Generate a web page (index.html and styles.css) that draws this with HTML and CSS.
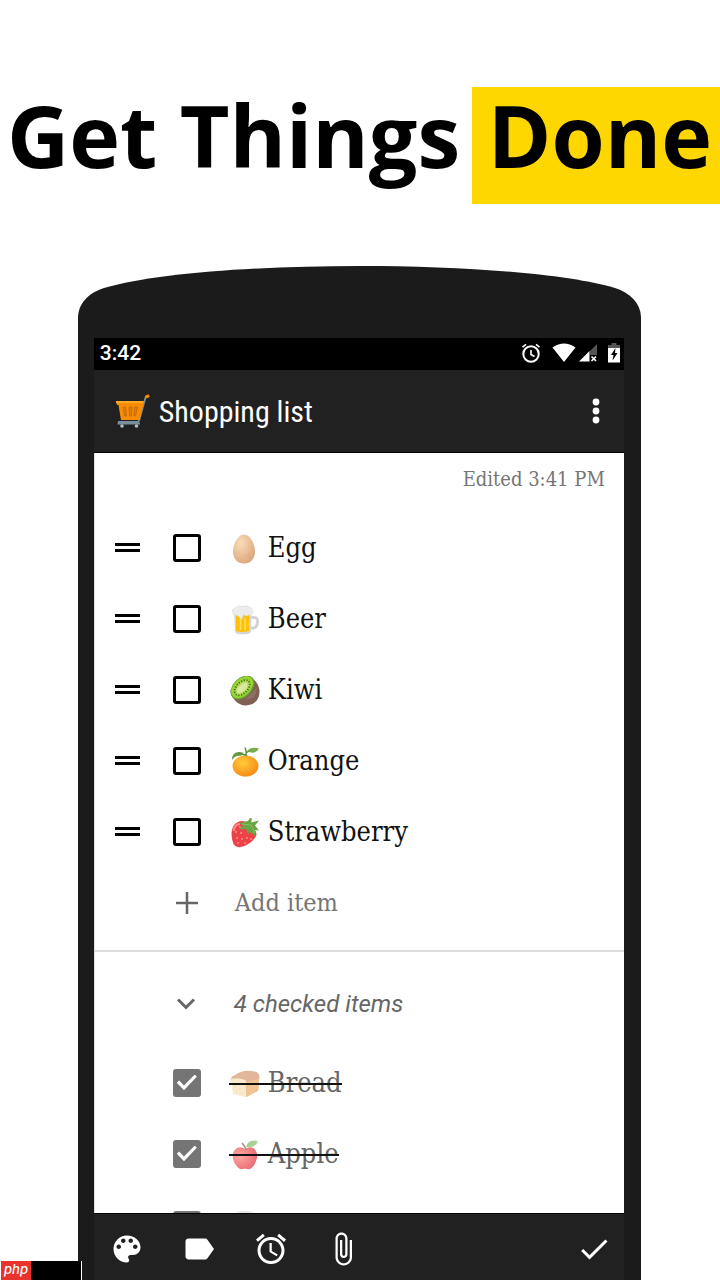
FILE: index.html
```html
<!DOCTYPE html>
<html lang="en">
<head>
    <meta charset="UTF-8">
    <meta name="viewport" content="width=device-width, initial-scale=1.0">
    <title>Get Things Done</title>
    <link rel="stylesheet" href="styles.css">
</head>
<body>
    <h1 class="headline"><span>Get Things</span> <mark>Done</mark></h1>

    <div class="phone">
        <svg class="phone-top" viewBox="0 0 562 72" preserveAspectRatio="none" aria-hidden="true">
            <path d="M0 72V52C0 38 10 27 26 22C78 7 180 0 281 0S484 7 536 22C552 27 562 38 562 52V72Z" fill="#1b1b1b"/>
        </svg>
        <div class="screen">
            <div class="status-bar">
                <span class="clock">3:42</span>
                <svg width="20" height="20" viewBox="0 0 20 20" fill="none" stroke="#fff" stroke-width="2"><circle cx="10" cy="11" r="7.7"/><path d="M10 7v4.5l3.5 2M1.5 4.2 5 1.3M18.5 4.2 15 1.3" stroke-width="1.6"/></svg>
                <svg class="wifi" width="24" height="20" viewBox="0 0 24 20"><path d="M.5 4.5Q12-3.5 23.5 4.5L12 19Z" fill="#fff"/></svg>
                <svg class="signal" width="19" height="18" viewBox="0 0 19 18"><path d="M18 0V11H11V7Z" fill="#555"/><path d="M0 17.5 10.5 7V17.5Z" fill="#fff"/><path d="m12.5 12.5 4.5 4.5m0-4.5-4.5 4.5" stroke="#fff" stroke-width="1.7"/></svg>
                <svg class="battery" width="12" height="20" viewBox="0 0 12 20"><path d="M3.5 0h5v2H12v3H0V2h3.5Z" fill="#555"/><path d="M0 5h12v14.5H0Z" fill="#fff"/><path d="M7.5 5 3 12h2.5L4.5 17.5 9.5 10H7Z" fill="#000"/></svg>
            </div>

            <header class="app-bar">
                <svg width="34" height="34" viewBox="0 0 34 34">
                    <path d="M33 2.2 29.5 3.5 23.5 25.5 22 28H2" fill="none" stroke="#78909c" stroke-width="1.8"/>
                    <path d="M0 7.5h28L23.5 26H5L2.5 11H1Z" fill="#fb8c00"/>
                    <path d="M0 8h27.5" stroke="#ffa726" stroke-width="2"/>
                    <path d="m7 13 1.500 9h2L9.500 13ZM13 13l.5 9h2l.5-9ZM21.500 13l-2 9h-1.500l.5-9Z" fill="#e07b08" stroke="#b86a12" stroke-width=".8"/>
                    <path d="M29.5 3.2 33.2 1.5" stroke="#fb8c00" stroke-width="3"/>
                    <path d="M1.5 29.5H24" stroke="#78909c" stroke-width="2"/>
                    <circle cx="6" cy="32" r="1.8" fill="#b0bec5"/><circle cx="20.5" cy="32" r="1.8" fill="#b0bec5"/>
                </svg>
                <h2>Shopping list</h2>
                <button type="button" class="menu-button" aria-label="More options">
                    <svg width="8" height="26" viewBox="0 0 8 26" fill="#fff"><circle cx="4" cy="4" r="3.4"/><circle cx="4" cy="13" r="3.4"/><circle cx="4" cy="22" r="3.4"/></svg>
                </button>
            </header>

            <main class="note">
                <p class="edited">Edited 3:41 PM</p>

                <ul class="items">
                    <li class="item">
                        <span class="handle"></span>
                        <input type="checkbox" id="egg">
                        <label for="egg">
                            <svg class="food" viewBox="0 0 30 30"><defs><radialGradient id="eggFill" cx=".35" cy=".3" r=".75"><stop offset="0" stop-color="#fbdcb8"/><stop offset="1" stop-color="#dca77c"/></radialGradient></defs><path d="M14 .5C20 .5 25 10 25 17.5S20.5 29.5 14 29.500 3 25 3 17.500 8 .5 14 .5Z" fill="url(#eggFill)"/><g fill="#c98f62"><circle cx="19" cy="20" r=".6"/><circle cx="20" cy="23" r=".6"/><circle cx="16" cy="21" r=".5"/></g></svg>
                            Egg
                        </label>
                    </li>
                    <li class="item">
                        <span class="handle"></span>
                        <input type="checkbox" id="beer">
                        <label for="beer">
                            <svg class="food" viewBox="0 0 30 30"><path d="M20 12.500h4q4 0 3.500 5t-4 5.500H20" fill="none" stroke="#d2d2d2" stroke-width="3"/><path d="M4 7h17.500l-.5 19.500q0 3-8 3T5 26.500Z" fill="#d5d8da"/><path d="M6 8h13.500l-.5 18q-6.500 2-13 0Z" fill="#ffc107"/><path d="M10.500 13v12M15 13v12" stroke="#ffdf5c" stroke-width="1.500"/><path d="M3 8Q1 5 5 3q3-3 7-1.500Q17-.5 20 2.500q4 1.500 2.500 6-1 2.500-4 1.500-2 2-4 0-2 0-2.500 4-1.500 1-2.500-2-1-1-3.500-2Q3 10 3 8Z" fill="#ececec" stroke="#d8d8d8" stroke-width=".6"/></svg>
                            Beer
                        </label>
                    </li>
                    <li class="item">
                        <span class="handle"></span>
                        <input type="checkbox" id="kiwi">
                        <label for="kiwi">
                            <svg class="food" viewBox="0 0 30 30"><path d="M20 1q8 4 9.500 13 .5 10-7 14-10 4-17-3-5-5-5-11Z" fill="#806054"/><path d="M23 22q4-4 3.500-10L15 24Z" fill="#8f7065"/><ellipse cx="12.5" cy="11.5" rx="14" ry="9.5" fill="#689f38" transform="rotate(-45 12.5 11.5)"/><ellipse cx="12.2" cy="11.2" rx="13" ry="8.5" fill="#95d52f" transform="rotate(-45 12.2 11.2)"/><ellipse cx="12.2" cy="11.7" rx="9" ry="5.5" fill="#b8e05e" stroke="#4c6b22" stroke-width="2" stroke-dasharray="1.2 1.5" transform="rotate(-45 12.2 11.7)"/><ellipse cx="12.2" cy="12" rx="6.5" ry="3.2" fill="#dce7a1" transform="rotate(-45 12.2 12)"/></svg>
                            Kiwi
                        </label>
                    </li>
                    <li class="item">
                        <span class="handle"></span>
                        <input type="checkbox" id="orange">
                        <label for="orange">
                            <svg class="food" viewBox="0 0 30 30"><defs><radialGradient id="orangeFill" cx=".4" cy=".35" r=".65"><stop offset="0" stop-color="#ffcc38"/><stop offset="1" stop-color="#f78c19"/></radialGradient></defs><ellipse cx="15.5" cy="19" rx="13" ry="10.5" fill="url(#orangeFill)"/><path d="M2 13Q2 3 13 5.5q0 4-6 3.5-3 1-5 4Z" fill="#679f48"/><path d="M17 4q4-5 12-2.5-4 7-12 2.5Z" fill="#78ad50"/><path d="M16 9q1-4-1-8.500M8 6l9 2.500M16 6l3-2" fill="none" stroke="#5c8f3d" stroke-width="1.5"/></svg>
                            Orange
                        </label>
                    </li>
                    <li class="item">
                        <span class="handle"></span>
                        <input type="checkbox" id="strawberry">
                        <label for="strawberry">
                            <svg class="food" viewBox="0 0 30 30"><path d="M8 4q6-3 12 3 7 5 6.500 10-3 7-12 11-8 3-11-2-3-8-1.500-14Q3 6 8 4Z" fill="#ef4248"/><path d="M4 13q0-7 6-7" fill="none" stroke="#ff8a8b" stroke-width="2"/><g fill="#ffc2a5"><circle cx="6" cy="14" r=".8"/><circle cx="11" cy="15" r=".8"/><circle cx="7" cy="20" r=".8"/><circle cx="12" cy="21" r=".8"/><circle cx="8" cy="25" r=".8"/><circle cx="17" cy="20" r=".8"/><circle cx="15" cy="25" r=".8"/><circle cx="21" cy="21" r=".8"/><circle cx="10" cy="9" r=".8"/></g><path d="M9 5 18 3 20 0l2 .5-1 4 8-2-4 5 4 5-4-.5v6l-5-4-2 2-2-5-7 .5 4-4Z" fill="#68a544"/><path d="m12 6 9 1 4 8" fill="none" stroke="#8ac162"/></svg>
                            Strawberry
                        </label>
                    </li>
                </ul>
                <button type="button" class="add-item">
                    <svg width="22" height="22" viewBox="0 0 22 22" stroke="#666" stroke-width="2.5"><path d="M11 0v22M0 11h22"/></svg>
                    Add item
                </button>

                <section class="checked">
                    <button type="button" class="checked-toggle" aria-expanded="true">
                        <svg width="18" height="12" viewBox="0 0 18 12" fill="none" stroke="#666" stroke-width="3"><path d="m1 1.500 8 8 8-8"/></svg>
                        4 checked items
                    </button>
                    <ul class="items">
                        <li class="item">
                            <input type="checkbox" id="bread" checked>
                            <label for="bread">
                                <svg class="food" viewBox="0 0 30 30"><path d="M1 12Q0 8 5 6q8-5 15-4 10 0 9.500 7l-1 2-.5 11-12 6-1-14Z" fill="#d39160"/><path d="m16 13 13-3-.5 11L16 28Z" fill="#e9a558"/><path d="M1 10q7-2 14 1 3 2 .5 6V28L3 25Q2 20 2 15-.5 13 1 10Z" fill="#f7dfb3"/><g fill="#d9b98a"><circle cx="5" cy="17" r=".7"/><circle cx="10" cy="20" r=".7"/><circle cx="7" cy="23" r=".6"/><circle cx="12" cy="24" r=".7"/></g></svg>
                                Bread
                            </label>
                        </li>
                        <li class="item">
                            <input type="checkbox" id="apple" checked>
                            <label for="apple">
                                <svg class="food" viewBox="0 0 30 30"><defs><radialGradient id="appleFill" cx=".3" cy=".4" r=".7"><stop offset="0" stop-color="#ff7a70"/><stop offset="1" stop-color="#df2030"/></radialGradient></defs><path d="M15 9q4-3 8-1 5 3 4 10-2 8-7 11-2 .5-5-.5-3 1-5 .5-5-3-7-10-1-8 4-11 4-2 8 1Z" fill="url(#appleFill)"/><path d="M16 10q-1-4-4-7" fill="none" stroke="#795548" stroke-width="1.7"/><path d="M16 7q2-8 12-6-2 7-12 6Z" fill="#81b65b"/></svg>
                                Apple
                            </label>
                        </li>
                        <li class="item">
                            <input type="checkbox" aria-label="Checked item" checked>
                            <svg class="food" viewBox="0 0 30 30"><path d="M7 1q8-2 16 0l-2 26.500q-6 2-12 0Z" fill="#d8d8d8"/></svg>
                        </li>
                    </ul>
                </section>
            </main>

            <nav class="toolbar">
                <button type="button" aria-label="Color">
                    <svg width="36" height="36" viewBox="0 0 24 24" fill="#fff"><path d="M12 3c-4.970 0-9 4.030-9 9s4.030 9 9 9c.83 0 1.500-.67 1.500-1.500 0-.39-.15-.74-.39-1.010-.23-.26-.38-.61-.38-.99 0-.83.67-1.500 1.500-1.500H16c2.760 0 5-2.240 5-5 0-4.420-4.030-8-9-8zm-5.500 9c-.83 0-1.500-.67-1.500-1.500S5.670 9 6.500 9 8 9.670 8 10.500 7.330 12 6.500 12zm3-4C8.670 8 8 7.330 8 6.500S8.670 5 9.500 5s1.500.67 1.500 1.500S10.330 8 9.500 8zm5 0c-.83 0-1.500-.67-1.500-1.500S13.670 5 14.500 5s1.500.67 1.500 1.500S15.330 8 14.500 8zm3 4c-.83 0-1.500-.67-1.500-1.500S16.670 9 17.500 9s1.500.67 1.500 1.500-.67 1.500-1.500 1.500z"/></svg>
                </button>
                <button type="button" aria-label="Label">
                    <svg width="36" height="36" viewBox="0 0 24 24" fill="#fff"><path d="M17.630 5.840C17.270 5.330 16.670 5 16 5L5 5.010C3.900 5.010 3 5.900 3 7v10c0 1.100.9 1.990 2 1.990L16 19c.67 0 1.270-.33 1.630-.84L22 12l-4.370-6.160z"/></svg>
                </button>
                <button type="button" aria-label="Reminder">
                    <svg width="36" height="36" viewBox="0 0 24 24" fill="#fff"><path d="M22 5.720l-4.600-3.860-1.290 1.530 4.600 3.860L22 5.720zM7.880 3.390L6.600 1.860 2 5.710l1.290 1.530 4.590-3.850zM12.500 8H11v6l4.750 2.850.75-1.230-4-2.370V8zM12 4c-4.970 0-9 4.030-9 9s4.020 9 9 9c4.970 0 9-4.030 9-9s-4.030-9-9-9zm0 16c-3.870 0-7-3.130-7-7s3.130-7 7-7 7 3.130 7 7-3.130 7-7 7z"/></svg>
                </button>
                <button type="button" aria-label="Attach">
                    <svg width="36" height="36" viewBox="0 0 24 24" fill="#fff"><path d="M16.500 6v11.500c0 2.210-1.790 4-4 4s-4-1.790-4-4V5c0-1.380 1.120-2.500 2.500-2.500s2.500 1.120 2.500 2.500v10.500c0 .55-.45 1-1 1s-1-.45-1-1V6H10v9.500c0 1.380 1.120 2.500 2.500 2.500s2.500-1.120 2.500-2.500V5c0-2.210-1.790-4-4-4S7 2.790 7 5v12.500c0 3.040 2.460 5.500 5.500 5.500s5.500-2.460 5.500-5.500V6h-1.500z"/></svg>
                </button>
                <button type="button" class="done-button" aria-label="Done">
                    <svg width="36" height="36" viewBox="0 0 24 24" fill="#fff"><path d="M9 16.170L4.830 12l-1.420 1.410L9 19 21 7l-1.410-1.410z"/></svg>
                </button>
            </nav>
        </div>
    </div>

    <div class="watermark"><span>php</span></div>
</body>
</html>
```
FILE: styles.css
```css
* {
    box-sizing: border-box;
}
body {
    background-color: #fff;
    color: #000;
    font-family: Roboto, sans-serif;
    display: flex;
    flex-direction: column;
    height: 100vh;
    margin: 0;
    overflow: hidden;
}
h2, p, ul {
    margin: 0;
    padding: 0;
}
svg {
    display: block;
    flex: none;
}
button {
    background: none;
    border: none;
    padding: 0;
    color: inherit;
    cursor: pointer;
}
.headline {
    display: flex;
    justify-content: space-between;
    margin: 87px 0 62px;
    padding-left: 7px;
    font-family: "Segoe UI", "Open Sans", sans-serif;
    font-size: 86px;
    font-weight: 700;
    line-height: 95px;
    white-space: nowrap;
}
.headline mark {
    background-color: #ffd700;
    color: inherit;
    padding: 0 8px 22px 16px;
}

/* Phone */
.phone {
    display: flex;
    flex-direction: column;
    flex: 1;
    min-height: 0;
    width: 78.2%;
    margin: 0 11% 0 auto;
}
.phone-top {
    width: 100%;
    height: 72px;
}
.screen {
    display: flex;
    flex-direction: column;
    flex: 1;
    min-height: 0;
    border: solid #1b1b1b;
    border-width: 0 17px 0 16px;
}
.status-bar {
    display: flex;
    align-items: center;
    height: 32px;
    padding: 0 4px 2px 6px;
    background-color: #000;
    color: #fff;
}
.clock {
    margin-right: auto;
    font-size: 21px;
    font-weight: 500;
}
.wifi {
    margin-left: 11px;
}
.signal {
    margin-left: 3px;
}
.battery {
    margin-left: 10px;
}
.app-bar {
    display: flex;
    align-items: center;
    height: 83px;
    padding: 0 24px 0 22px;
    background-color: #212121;
    border-bottom: 1px solid #000;
    color: #fff;
}
.app-bar h2 {
    margin-left: 9px;
    font-family: "Roboto Condensed", Roboto, sans-serif;
    font-size: 30px;
    font-weight: 400;
}
.menu-button {
    margin-left: auto;
}

/* Note */
.note {
    flex: 1;
    min-height: 0;
    overflow: hidden;
    background-color: #fff;
    border-left: 1px solid #ddd;
    font-family: "Roboto Slab", "DejaVu Serif Condensed", "DejaVu Serif", serif;
}
.edited {
    height: 59px;
    padding: 10px 19px 0 0;
    color: #757575;
    font-size: 20px;
    line-height: 32px;
    text-align: right;
}
.items {
    list-style: none;
}
.item {
    display: flex;
    align-items: center;
    height: 71px;
    padding-left: 20px;
    font-size: 27px;
}
.handle {
    width: 25px;
    height: 9px;
    margin-right: 33px;
    border: solid #000;
    border-width: 3px 0;
}
.item input {
    appearance: none;
    display: grid;
    place-items: center;
    flex: none;
    width: 28px;
    height: 28px;
    margin: 0 28px 0 0;
    border: 3px solid #000;
    border-radius: 3px;
}
.item label {
    display: flex;
    align-items: center;
    position: relative;
    color: #111;
}
.food {
    width: 30px;
    height: 30px;
    margin: 2px 8px 0 1px;
}
.add-item, .checked-toggle {
    display: flex;
    align-items: center;
    width: 100%;
    height: 71px;
    color: #757575;
    font-size: 24px;
}
.add-item {
    gap: 37px;
    padding-left: 81px;
    font-family: inherit;
    font-size: 25px;
}
.checked {
    margin-top: 12px;
    border-top: 2px solid #ddd;
}
.checked-toggle {
    gap: 39px;
    margin: 16px 0 8px;
    padding-left: 82px;
    color: #666;
    font-family: Roboto, sans-serif;
    font-style: italic;
}
.checked .item {
    padding-left: 78px;
}
.checked input {
    background-color: #757575;
    border-color: #757575;
}
.checked input::before {
    content: "";
    width: 20px;
    height: 16px;
    background-color: #fff;
    clip-path: polygon(0 52%, 12% 38%, 36% 68%, 90% 0, 100% 14%, 36% 98%);
}
.checked label {
    color: #666;
}
.checked label::after {
    content: "";
    position: absolute;
    left: 0;
    right: 0;
    top: 50%;
    border-top: 2px solid #111;
}
.checked .food {
    opacity: 0.65;
}

/* Bottom toolbar */
.toolbar {
    display: flex;
    align-items: center;
    gap: 36px;
    height: 67px;
    padding: 4px 12px 0 15px;
    background-color: #212121;
    border-top: 1px solid #000;
}
.done-button {
    margin-left: auto;
}

/* Badge over the lower left corner */
.watermark {
    position: absolute;
    left: 0;
    bottom: 0;
    display: flex;
    width: 82px;
    height: 19px;
    background-color: #000;
    border: solid #fff;
    border-width: 0 1px;
}
.watermark span {
    width: 30px;
    background-color: #e8322e;
    color: #fff;
    font-family: Inter, sans-serif;
    font-size: 13px;
    font-style: italic;
    font-weight: 500;
    line-height: 16px;
    text-align: center;
}
```
